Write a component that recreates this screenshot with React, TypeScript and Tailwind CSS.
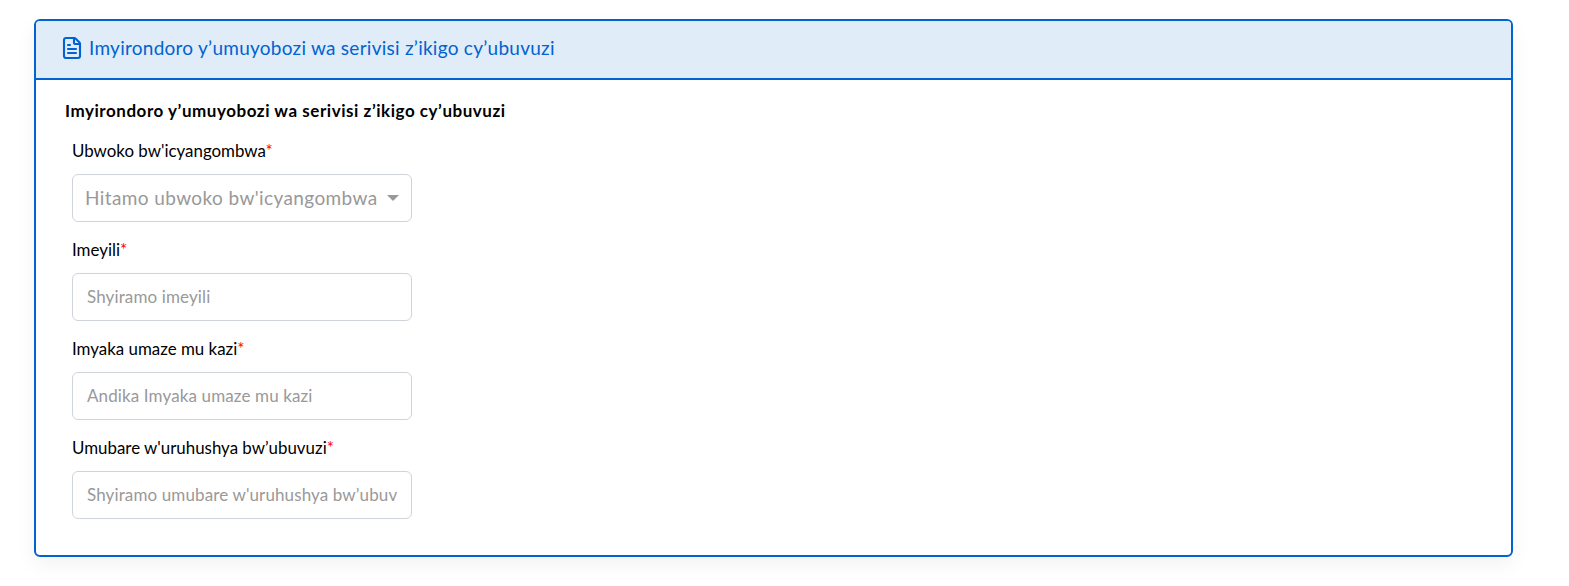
import React from 'react';
import { FileText } from 'lucide-react';

const font = "font-['Lato','Noto_Sans',sans-serif]";

const Label = ({ text }: { text: string }) => (
  <label className="block text-[16.9px] leading-[24px] text-black">
    {text}
    <span className="text-[#ff0000]">*</span>
  </label>
);

const Field = ({ label, placeholder }: { label: string; placeholder: string }) => (
  <div className="flex flex-col gap-[11px] mb-[16px]">
    <Label text={label} />
    <input
      readOnly
      placeholder={placeholder}
      className="w-[340px] h-[48px] rounded-[6px] border border-[#ced4da] bg-white px-[14px] pb-[2px] text-[17px] tracking-[0.12px] text-black placeholder:text-[#999999] outline-none"
    />
  </div>
);

const App = () => {
  return (
    <div className={`min-h-screen bg-white pt-[19px] pl-[34px] pr-[56px] ${font}`}>
      <div className="h-[538px] rounded-[6px] border-2 border-[#0063d1] bg-white overflow-hidden shadow-[0_8px_20px_rgba(0,0,0,0.05)]">
        {/* Header */}
        <div className="h-[59px] flex items-center gap-[5px] pl-[24px] bg-[#e0ecf8] border-b-2 border-[#0063d1] text-[#0063d1]">
          <FileText size={24} strokeWidth={2.1} className="-mt-[3px]" />
          <span className="text-[19px] tracking-[0.26px] -mt-[2px]">Imyirondoro y’umuyobozi wa serivisi z’ikigo cy’ubuvuzi</span>
        </div>

        {/* Body */}
        <div className="pt-[19px] pl-[29px]">
          <h2 className="text-[17px] leading-[24px] tracking-[0.54px] font-bold text-black mb-[16px]">
            Imyirondoro y’umuyobozi wa serivisi z’ikigo cy’ubuvuzi
          </h2>
          <div className="pl-[7px]">
            <div className="flex flex-col gap-[11px] mb-[16px]">
              <Label text="Ubwoko bw'icyangombwa" />
              <div className="w-[340px] h-[48px] rounded-[6px] border border-[#ced4da] bg-white pl-[12px] pr-[12px] flex items-center justify-between">
                <span className="text-[19px] tracking-[0.4px] text-[#999999] whitespace-nowrap">Hitamo ubwoko bw'icyangombwa</span>
                <span className="w-0 h-0 border-l-[6px] border-r-[6px] border-t-[6px] border-l-transparent border-r-transparent border-t-[#999999]" />
              </div>
            </div>
            <Field label="Imeyili" placeholder="Shyiramo imeyili" />
            <Field label="Imyaka umaze mu kazi" placeholder="Andika Imyaka umaze mu kazi" />
            <Field label="Umubare w'uruhushya bw’ubuvuzi" placeholder="Shyiramo umubare w'uruhushya bw’ubuvuzi" />
          </div>
        </div>
      </div>
    </div>
  );
};

export default App;
